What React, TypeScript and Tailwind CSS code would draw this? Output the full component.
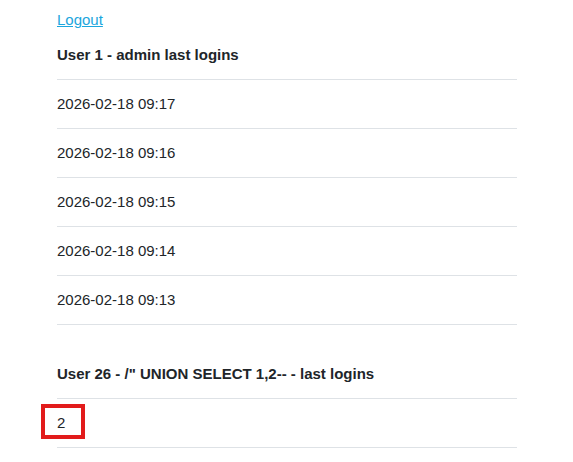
import React from "react";

const rows = ["2026-02-18 09:17", "2026-02-18 09:16", "2026-02-18 09:15", "2026-02-18 09:14", "2026-02-18 09:13"];

export default function App() {
  return (
    <div className="bg-white min-h-[462px] text-[#212529] text-[15px] leading-[22px]" style={{ fontFamily: '"Liberation Sans", Arial, sans-serif' }}>
      <div className="w-[460px] ml-[57px] pt-[9px]">
        <div className="h-[22px]">
          <a href="#" className="text-[#1ba6dd] underline">Logout</a>
        </div>
        <div className="h-[49px] flex items-center font-bold border-b border-[#dee2e6]">User 1 - admin last logins</div>
        {rows.map((r) => (
          <div key={r} className="h-[49px] flex items-center border-b border-[#dee2e6]">{r}</div>
        ))}
        <div className="h-[25px]" />
        <div className="h-[49px] flex items-center font-bold border-b border-[#dee2e6]">User 26 - /" UNION SELECT 1,2-- - last logins</div>
        <div className="h-[49px] flex items-center border-b border-[#dee2e6] relative">
          <span>2</span>
          <div className="absolute left-[-16px] top-[5px] w-[44px] h-[35px] border-4 border-[#e21b1b]" />
        </div>
      </div>
    </div>
  );
}
